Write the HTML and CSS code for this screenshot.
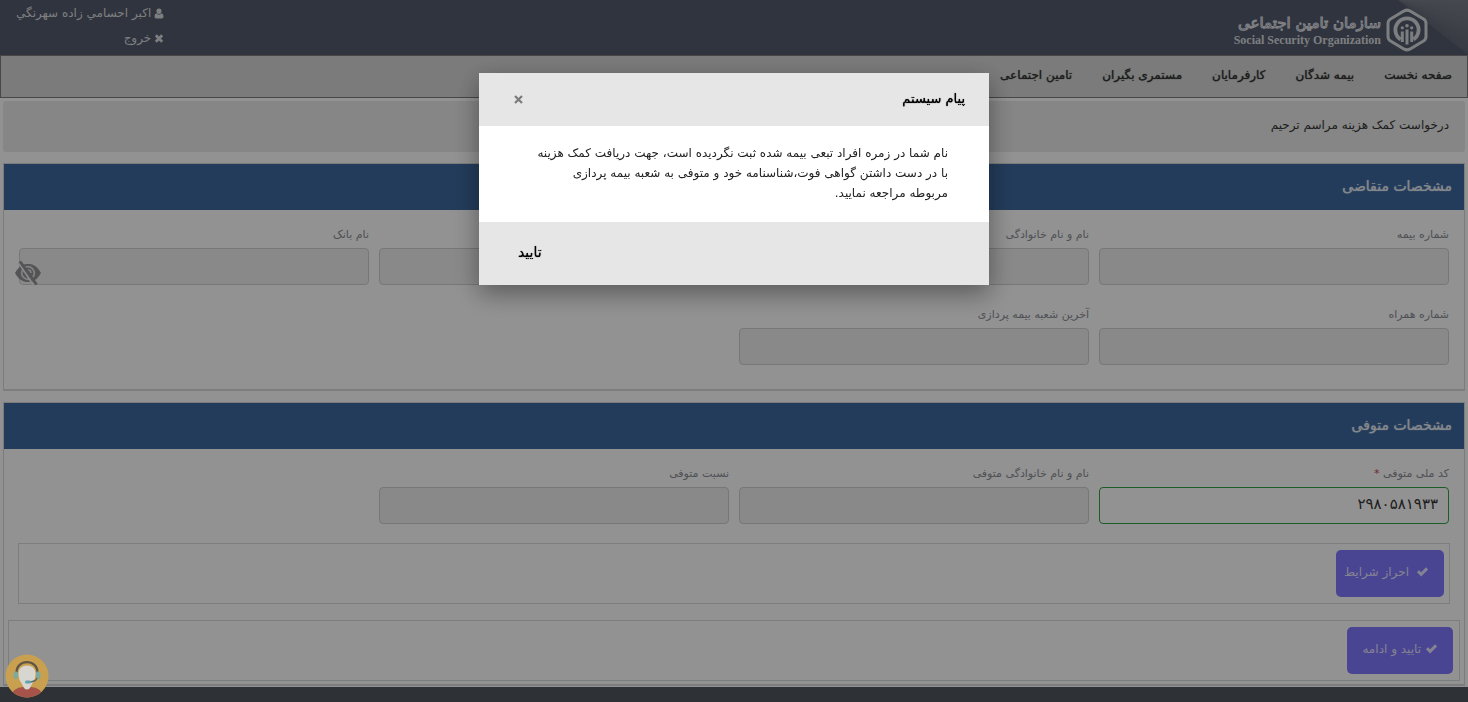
FILE: index.html
```html
<!DOCTYPE html>
<html lang="fa" dir="rtl">
<head>
<meta charset="utf-8">
<title>درخواست کمک هزینه مراسم ترحیم</title>
<link rel="stylesheet" href="styles.css">
</head>
<body>
<svg class="sprite" aria-hidden="true">
  <symbol id="check" viewBox="0 0 14 12"><path d="M1 6.2 3.2 4 5.6 6.4 10.8 1 13 3.2 5.6 10.8Z" fill="currentColor"/></symbol>
  <symbol id="cross" viewBox="0 0 12 12"><path d="M2.2 2.2 9.8 9.8M9.8 2.2 2.2 9.8" stroke="currentColor" stroke-width="3.4" fill="none"/></symbol>
  <symbol id="times" viewBox="0 0 12 12"><path d="M2.200 2.200 9.800 9.800M9.800 2.200 2.200 9.800" stroke="currentColor" stroke-width="2.400" fill="none"/></symbol>
  <symbol id="user" viewBox="0 0 12 12"><path d="M6 0a3 3 0 0 1 3 3.2C9 5 7.800 6.600 6 6.600S3 5 3 3.200A3 3 0 0 1 6 0ZM3 5.800C4.600 8 7.400 8 9 5.800 10.800 6.200 11.300 8 11.300 10c0 1.200-.8 2-1.900 2H2.600C1.500 12 .7 11.200.7 10 .7 8 1.200 6.200 3 5.800Z" fill="currentColor"/></symbol>
</svg>
<header class="top">
  <div class="brand">
    <svg class="emblem" viewBox="0 0 42 44" fill="none" stroke="currentColor">
      <path d="M17 3.500Q21 .8 25 3.500L37.500 11Q40 12.500 40 15.500V28.500Q40 31.500 37.500 33L25 40.500Q21 43.200 17 40.500L4.500 33Q2 31.500 2 28.500V15.500Q2 12.500 4.500 11Z" stroke-width="3"/>
      <path d="M14.500 31.500A11.600 11.600 0 1 1 27.500 31.500" stroke-width="3.800"/>
      <path d="M21 21.500V36.500M16.300 23.500V34M25.700 23.500V34" stroke-width="3"/>
      <circle cx="21" cy="17.800" r="1.800" fill="currentColor" stroke="none"/>
      <circle cx="16.300" cy="19.800" r="1.600" fill="currentColor" stroke="none"/>
      <circle cx="25.700" cy="19.800" r="1.600" fill="currentColor" stroke="none"/>
    </svg>
    <div class="brand-text">
      <span class="brand-fa">سازمان تامین اجتماعی</span>
      <span class="brand-en" dir="ltr">Social Security Organization</span>
    </div>
  </div>
  <div class="account">
    <span class="account-row"><svg><use href="#user"/></svg>اكبر احسامي زاده سهرنگي</span>
    <a class="account-row" href="#"><svg><use href="#cross"/></svg>خروج</a>
  </div>
</header>
<nav class="menu">
  <a href="#">صفحه نخست</a>
  <a href="#">بیمه شدگان</a>
  <a href="#">کارفرمایان</a>
  <a href="#">مستمری بگیران</a>
  <a href="#">تامین اجتماعی</a>
</nav>
<main>
  <h1 class="page-title">درخواست کمک هزینه مراسم ترحیم</h1>
  <section class="panel">
    <h2>مشخصات متقاضی</h2>
    <div class="fields">
      <div class="field"><label for="ins">شماره بیمه</label><input id="ins" disabled></div>
      <div class="field"><label for="name">نام و نام خانوادگی</label><input id="name" disabled></div>
      <div class="field"><label for="acc">&nbsp;</label><input id="acc" disabled></div>
      <div class="field"><label for="bank">نام بانک</label><input id="bank" disabled></div>
      <div class="field"><label for="mob">شماره همراه</label><input id="mob" disabled></div>
      <div class="field"><label for="branch">آخرین شعبه بیمه پردازی</label><input id="branch" disabled></div>
    </div>
  </section>
  <section class="panel">
    <h2>مشخصات متوفی</h2>
    <div class="fields">
      <div class="field"><label for="nid">کد ملی متوفی <span class="req">*</span></label><input id="nid" class="valid" value="۲۹۸۰۵۸۱۹۳۳"></div>
      <div class="field"><label for="dname">نام و نام خانوادگی متوفی</label><input id="dname" disabled></div>
      <div class="field"><label for="rel">نسبت متوفی</label><input id="rel" disabled></div>
    </div>
    <div class="actions inner"><button class="primary wide" type="button"><svg><use href="#check"/></svg>احراز شرایط</button></div>
    <div class="actions"><button class="primary" type="button"><svg><use href="#check"/></svg>تایید و ادامه</button></div>
  </section>
</main>
<footer class="foot"></footer>
<button class="eye" type="button" aria-label="نمایش">
  <svg viewBox="0 0 28 26"><path d="M1 13C5 5.500 10 4 14 4s9 1.500 13 9c-4 7.500-9 9-13 9S5 20.500 1 13Z" fill="currentColor"/><circle cx="14" cy="13" r="6.300" fill="none" stroke="#d6d6d6" stroke-width="1.800"/><path d="M14 10a3 3 0 0 1 3 3" fill="none" stroke="#d6d6d6" stroke-width="1.600"/><path d="M4.500 2.500 20 26" stroke="#e4e4e4" stroke-width="2"/><path d="M6 1.500 22.500 24.500" stroke="currentColor" stroke-width="3"/></svg>
</button>
<div class="overlay">
  <div class="modal" role="dialog" aria-modal="true" aria-labelledby="mt">
    <div class="modal-head"><h3 id="mt">پیام سیستم</h3><button class="close" type="button" aria-label="بستن"><svg><use href="#times"/></svg></button></div>
    <p class="modal-body">نام شما در زمره افراد تبعی بیمه شده ثبت نگردیده است، جهت دریافت کمک هزینه<br>با در دست داشتن گواهی فوت،شناسنامه خود و متوفی به شعبه بیمه پردازی<br>مربوطه مراجعه نمایید.</p>
    <div class="modal-foot"><button class="ok" type="button">تایید</button></div>
  </div>
</div>
<button class="support" type="button" aria-label="پشتیبانی">
  <svg viewBox="0 0 44 44">
    <defs><clipPath id="disc"><circle cx="22" cy="22" r="21.500"/></clipPath></defs>
    <g clip-path="url(#disc)">
      <rect width="44" height="44" fill="#c9a04f"/>
      <path d="M5 44Q8 33 18 33H26Q36 33 39 44Z" fill="#a65449"/>
      <path d="M13.500 18Q15 11.500 22 11.500T30.500 18Q31 25 27 30L25 34Q22 37 19 34L17 30Q13 25 13.500 18Z" fill="#d8d6d0"/>
      <path d="M11.500 19C11 4.500 33 4.500 32.500 19" fill="none" stroke="#5f5544" stroke-width="2.200"/>
      <rect x="8.500" y="17.500" width="4.500" height="7.500" rx="2" fill="#7fa99a"/>
      <rect x="31" y="17.500" width="4.500" height="7.500" rx="2" fill="#7fa99a"/>
      <path d="M32 24Q31 28 23 28" fill="none" stroke="#5f6a66" stroke-width="1.400"/>
      <rect x="20" y="26.500" width="6" height="3" rx="1.500" fill="#5fa3ae"/>
    </g>
  </svg>
</button>
</body>
</html>
```
FILE: styles.css
```css
* { box-sizing: border-box; }
body {
  margin: 0;
  min-height: 100vh;
  display: flex;
  flex-direction: column;
  background: #f3f3f3;
  color: #333;
  font: 12px/20px "DejaVu Sans", sans-serif;
}
a { color: inherit; text-decoration: none; }
button, input { font: inherit; }
h1, h2, h3, p { margin: 0; font-weight: normal; }
.sprite { position: absolute; width: 0; height: 0; }

.top {
  display: flex;
  justify-content: space-between;
  height: 55px;
  padding: 0 40px 0 16px;
  background: conic-gradient(from 0deg at 0 0, #757983 0 90deg, #6a6f7a 110deg, #5c6270 128deg, transparent 128deg) top right / 70px 55px no-repeat, #505868;
}
.brand { display: flex; align-items: center; gap: 5px; padding-top: 4px; color: #d0d2d6; }
.emblem { width: 42px; height: 44px; }
.brand-text { display: flex; flex-direction: column; }
.brand-fa { font-size: 15px; line-height: 20px; color: #505868; -webkit-text-stroke: 1px #dcdde0; }
.brand-en { font: bold 12px/14px "Liberation Serif", serif; }
.account { display: flex; flex-direction: column; gap: 5px; padding-top: 3px; color: #d0d2d6; }
.account-row { display: flex; align-items: center; gap: 3px; }
.account svg { width: 10px; height: 11px; }

.menu {
  display: flex;
  gap: 30px;
  height: 43px;
  padding: 9px 15px;
  border: 1px solid #777;
  background: #cecece;
}
.menu, .panel h2, .modal h3, .ok { text-shadow: 0 0 1px currentColor; }

main { padding: 3px 3px 1px; display: flex; flex-direction: column; gap: 11px; }
.page-title {
  padding: 14px 16px 17px;
  background: #dfdfdf;
  border-radius: 3px;
  font-size: 12px;
  line-height: 20px;
}
.panel { border: 1px solid #cfcfcf; border-bottom: 2px solid #d0d0d0; }
.panel h2 {
  padding: 11px 12px 13px;
  background: #3b6598;
  color: #dde1e8;
  font-size: 14px;
  line-height: 22px;
}
.fields {
  display: grid;
  grid-template-columns: repeat(4, 1fr);
  gap: 20px 10px;
  padding: 15px 15px 24px;
}
.field { display: flex; flex-direction: column; gap: 3px; }
.field label { font-size: 11px; line-height: 20px; color: #84888e; }
.field input {
  width: 100%;
  height: 37px;
  padding: 0 10px 4px;
  border: 1px solid #c4c6c8;
  border-radius: 4px;
  background: #e5e5e5;
}
.field input.valid { background: transparent; border-color: #2f9a40; color: #333; font-size: 15px; }
.req { color: #b8433f; }
.actions { margin: 0 4px 3px; padding: 6px; border: 1px solid #cfd0d4; }
.actions.inner { margin: -5px 14px 16px; padding: 6px 5px; }
.primary {
  display: flex;
  align-items: center;
  gap: 4px;
  height: 47px;
  padding: 0 15px 4px;
  border: 0;
  border-radius: 5px;
  background: #7b73f5;
  color: #dcdaf4;
}
.primary.wide { gap: 7px; padding: 0 15px 4px 8px; }
.primary svg { width: 13px; height: 12px; }
.foot { flex: 1; min-height: 15px; background: #4e535a; }

.eye {
  position: fixed;
  left: 14px;
  top: 260px;
  width: 28px;
  height: 26px;
  padding: 0;
  border: 0;
  background: none;
  color: #8d8d8f;
}
.eye svg, .support svg { display: block; width: 100%; height: 100%; }

.overlay {
  position: fixed;
  inset: 0;
  display: flex;
  align-items: flex-start;
  justify-content: center;
  padding-top: 73px;
  background: rgba(0, 0, 0, .4);
}
.modal { width: 510px; background: #fff; color: #222; box-shadow: 0 8px 24px rgba(0, 0, 0, .4); }
.modal-head, .modal-foot { display: flex; background: #e6e6e6; }
.modal-head { align-items: center; justify-content: space-between; padding: 15px 24px 16px 34px; }
.modal-head h3 { font-size: 13px; line-height: 22px; color: #000; }
.close { width: 11px; height: 11px; padding: 0; border: 0; background: none; color: #7b7b7b; }
.close svg { display: block; width: 11px; height: 11px; }
.modal-body { padding: 17px 41px 19px; white-space: nowrap; }
.modal-foot { justify-content: flex-end; padding: 16px 32px 15px; }
.ok { padding: 2px 7px 6px; border: 0; background: none; color: #000; font-size: 14px; line-height: 24px; }

.support {
  position: fixed;
  left: 5px;
  bottom: 4px;
  width: 44px;
  height: 44px;
  padding: 0;
  border: 0;
  background: none;
}
```
